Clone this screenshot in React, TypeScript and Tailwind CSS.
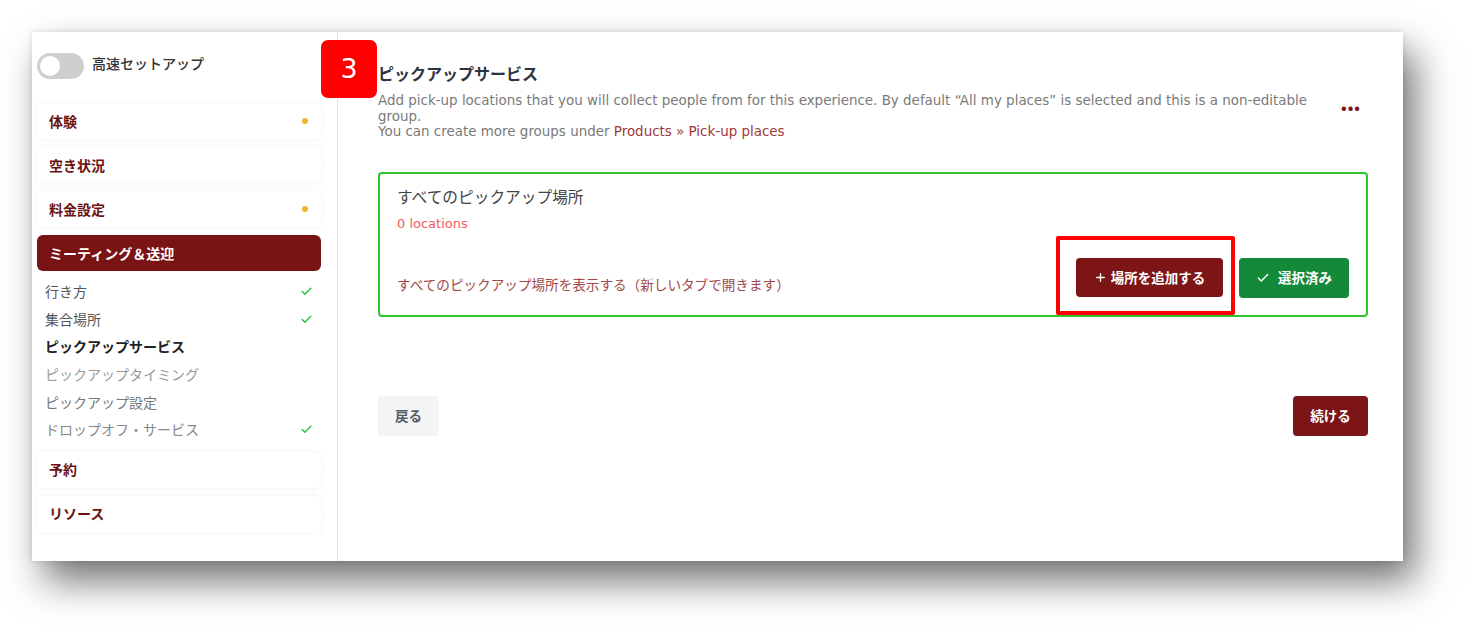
import { Check, Plus } from "lucide-react";

const jp = "font-['Noto_Sans_CJK_JP',sans-serif]";
const body = "font-['DejaVu_Sans','Noto_Sans_CJK_JP',sans-serif]";

type Section = { label: string; dot?: boolean; active?: boolean };

const topSections: Section[] = [
  { label: "体験", dot: true },
  { label: "空き状況" },
  { label: "料金設定", dot: true },
  { label: "ミーティング＆送迎", active: true },
];

const subItems = [
  { label: "行き方", done: true, tone: "text-[#555]" },
  { label: "集合場所", done: true, tone: "text-[#555]" },
  { label: "ピックアップサービス", tone: "text-[#222] font-bold" },
  { label: "ピックアップタイミング", tone: "text-[#999]" },
  { label: "ピックアップ設定", tone: "text-[#777]" },
  { label: "ドロップオフ・サービス", done: true, tone: "text-[#888]" },
];

function SectionCard({ label, dot, active }: Section) {
  return (
    <div
      className={
        active
          ? "flex h-[36px] items-center justify-between rounded-md bg-[#7a1313] px-3 text-[14px] font-bold text-white"
          : "flex h-[36px] items-center justify-between rounded-md bg-white px-3 text-[14px] font-bold text-[#6a1212] shadow-[0_0_6px_rgba(0,0,0,0.06)]"
      }
    >
      <span>{label}</span>
      {dot && <span className="mr-[1px] h-[6px] w-[6px] rounded-full bg-[#f0b429]" />}
    </div>
  );
}

function Sidebar() {
  return (
    <aside className={`w-[306px] shrink-0 border-r border-[#e3e3e3] pl-[5px] pr-[16px] pt-[21px] ${jp}`}>
      <div className="flex items-center gap-[8px]">
        <span className="flex h-[26px] w-[47px] items-center rounded-full bg-[#cfcfcf] px-[3px]">
          <span className="h-[20px] w-[20px] rounded-full bg-white" />
        </span>
        <span className="-mt-[5px] text-[14px] font-medium text-[#333]">高速セットアップ</span>
      </div>

      <div className="mt-[24px] flex flex-col gap-[8px]">
        {topSections.map((s) => (
          <SectionCard key={s.label} {...s} />
        ))}
      </div>

      <ul className="mt-[7px] flex flex-col pl-[8px] pr-[8px]">
        {subItems.map((item) => (
          <li key={item.label} className={`flex h-[27.6px] items-center justify-between text-[14px] ${item.tone}`}>
            <span>{item.label}</span>
            {item.done && <Check className="h-[13px] w-[13px] text-[#2cbf3a]" strokeWidth={2.5} />}
          </li>
        ))}
      </ul>

      <div className="mt-[8px] flex flex-col gap-[8px]">
        <SectionCard label="予約" />
        <SectionCard label="リソース" />
      </div>
    </aside>
  );
}

function PickupGroup() {
  return (
    <div className="mt-[32px] flex h-[145px] w-[990px] flex-col rounded-[4px] border-2 border-[#2fc52f] px-[17px] pt-[11px]">
      <div className={`text-[15.7px] text-[#444] ${jp}`}>すべてのピックアップ場所</div>
      <div className={`mt-[6px] text-[13px] text-[#f05a5a] ${body}`}>0 locations</div>
      <div className="mt-auto mb-[17px] flex items-end justify-between">
        <a className={`mb-[3px] text-[13.6px] text-[#a04848] ${jp}`}>
          すべてのピックアップ場所を表示する（新しいタブで開きます）
        </a>
        <div className="flex items-center gap-[16px]">
          <div className="relative">
            <button className={`flex h-[39px] w-[147px] items-center justify-center gap-[4px] rounded-[4px] bg-[#7d1416] text-[13.5px] font-bold text-white ${jp}`}>
              <Plus className="h-[13px] w-[13px]" strokeWidth={2.5} />
              場所を追加する
            </button>
            {/* highlight frame around the add button */}
            <span className="pointer-events-none absolute -left-[20px] -top-[22px] h-[79px] w-[179px] rounded-[2px] border-4 border-[#ff0000]" />
          </div>
          <button className={`flex h-[40px] w-[110px] items-center justify-center gap-[8px] rounded-[4px] bg-[#15893a] text-[13.5px] font-bold text-white ${jp}`}>
            <Check className="h-[14px] w-[14px]" strokeWidth={2.5} />
            選択済み
          </button>
        </div>
      </div>
    </div>
  );
}

function Main() {
  return (
    <main className="relative flex-1 pl-[40px] pt-[29px]">
      <span className={`absolute -left-[17px] top-[8px] flex h-[58px] w-[56px] items-center justify-center rounded-[7px] bg-[#ff0000] text-[27px] text-white ${body}`}>
        3
      </span>
      <h2 className={`text-[16px] font-bold text-[#2d3340] ${jp}`}>ピックアップサービス</h2>
      <div className="flex items-start">
        <p className={`mt-[8px] w-[950px] text-[13.45px] leading-[15.5px] text-[#7a7a7a] ${body}`}>
          Add pick-up locations that you will collect people from for this experience. By default “All my places” is
          selected and this is a non-editable group.
          <br />
          You can create more groups under{" "}
          <span className="text-[#a03838]">Products » Pick-up places</span>
        </p>
        <span className="ml-[13px] mt-[16px] text-[15px] font-bold leading-none tracking-[1px] text-[#7a1313]">•••</span>
      </div>

      <PickupGroup />

      <div className={`mt-[79px] flex w-[990px] items-center justify-between ${jp}`}>
        <button className="h-[40px] w-[61px] rounded-[4px] bg-[#f3f4f5] text-[13.5px] font-bold text-[#555b66]">戻る</button>
        <button className="h-[40px] w-[75px] rounded-[4px] bg-[#7d1416] text-[13.5px] font-bold text-white">続ける</button>
      </div>
    </main>
  );
}

export default function App() {
  return (
    <div className="h-[627px] w-[1468px] overflow-hidden bg-white pl-[32px] pt-[32px]">
      <div className="flex h-[529px] w-[1371px] bg-white shadow-[0_0_6px_rgba(0,0,0,0.12),12px_20px_36px_rgba(0,0,0,0.55)]">
        <Sidebar />
        <Main />
      </div>
    </div>
  );
}
